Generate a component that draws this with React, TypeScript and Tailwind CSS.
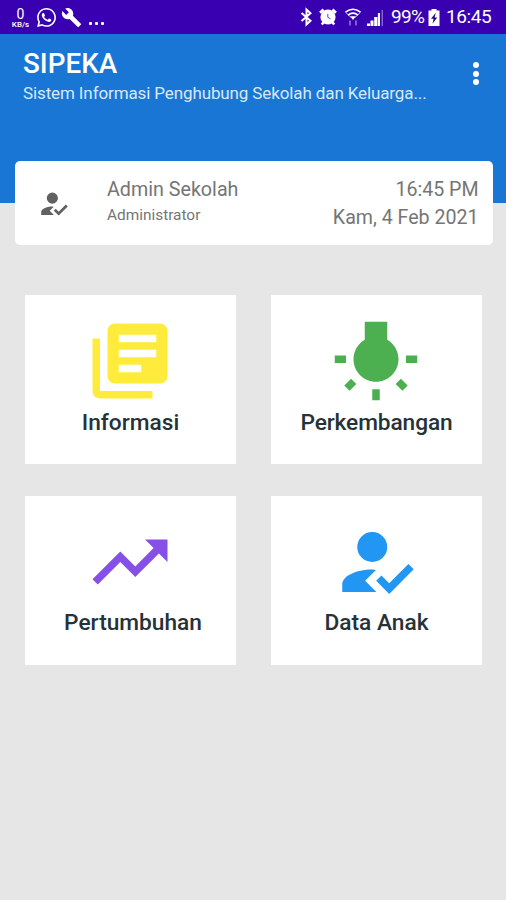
import React from 'react';

const USER_CHECK =
  'M20.65,12.5L22.05,13.91L15.52,20.5L12.05,17L13.45,15.59L15.52,17.67L20.65,12.5M9.1,17L12.1,20H3V18C3,15.79 6.58,14 11,14L11.99,14.11L9.1,17M11,4A4,4 0 0,1 15,8A4,4 0 0,1 11,12A4,4 0 0,1 7,8A4,4 0 0,1 11,4Z';

interface MenuItem {
  label: string;
  color: string;
  path: string;
  labelClass: string;
}

const menuItems: MenuItem[] = [
  {
    label: 'Informasi',
    color: 'text-[#ffeb3b]',
    path: 'M4 6H2v14c0 1.1.9 2 2 2h14v-2H4V6zm16-4H8c-1.1 0-2 .9-2 2v12c0 1.1.9 2 2 2h12c1.1 0 2-.9 2-2V4c0-1.1-.9-2-2-2zm-1 9H9V9h10v2zm-4 4H9v-2h6v2zm4-8H9V5h10v2z',
    labelClass: 'mt-[2px]',
  },
  {
    label: 'Perkembangan',
    color: 'text-[#4caf50]',
    path: 'M3.55 18.54l1.41 1.41 1.8-1.79-1.41-1.41-1.8 1.79zM11 22.45h2V19.5h-2v2.95zM4 10.5H1v2h3v-2zm11-4.19V1.5H9v4.81C7.21 7.35 6 9.28 6 11.5c0 3.31 2.69 6 6 6s6-2.69 6-6c0-2.22-1.21-4.15-3-5.19zm5 4.19v2h3v-2h-3zm-2.76 7.66l1.79 1.8 1.41-1.41-1.8-1.79-1.4 1.4z',
    labelClass: 'mt-[2px] tracking-[-0.1px]',
  },
  {
    label: 'Pertumbuhan',
    color: 'text-[#8650e8]',
    path: 'M16 6l2.29 2.29-4.88 4.88-4-4L2 16.59 3.41 18l6-6 4 4 6.3-6.29L22 12V6z',
    labelClass: 'mt-px pl-[5px]',
  },
  {
    label: 'Data Anak',
    color: 'text-[#2196f3]',
    path: USER_CHECK,
    labelClass: 'mt-px',
  },
];

const Icon: React.FC<{ path: string; className: string }> = ({ path, className }) => (
  <svg viewBox="0 0 24 24" fill="currentColor" className={className}>
    <path d={path} />
  </svg>
);

const StatusBar: React.FC = () => (
  <div className="flex h-[34px] items-center justify-between bg-[#3900b1] pr-[13px] pl-[10px] text-white">
    <div className="flex items-center">
      <div className="flex w-[21px] flex-col items-center pt-[2px]">
        <span className="text-[14px] leading-[12px]">0</span>
        <span className="text-[8px] leading-[9px] font-medium">KB/s</span>
      </div>
      {/* WhatsApp */}
      <svg viewBox="2 2 20 20" fill="currentColor" className="ml-[6px] h-[19px] w-[19px]">
        <path d="M12.04 2C6.58 2 2.13 6.45 2.13 11.91c0 1.75.46 3.45 1.32 4.95L2.05 22l5.25-1.38c1.45.79 3.08 1.21 4.74 1.21 5.46 0 9.91-4.45 9.91-9.91S17.5 2 12.04 2zm0 18.15c-1.48 0-2.93-.4-4.2-1.15l-.3-.18-3.12.82.83-3.04-.2-.31a8.26 8.26 0 0 1-1.26-4.38c0-4.54 3.7-8.24 8.24-8.24s8.24 3.7 8.24 8.24-3.69 8.24-8.23 8.24z" />
        <path d="M16.56 13.99c-.25-.12-1.47-.72-1.69-.81-.23-.08-.39-.12-.56.12-.17.25-.64.81-.78.97-.14.17-.29.19-.54.06-.25-.12-1.05-.39-1.99-1.23-.74-.66-1.23-1.47-1.38-1.72-.14-.25-.02-.38.11-.51.11-.11.25-.29.37-.43s.17-.25.25-.41c.08-.17.04-.31-.02-.43s-.56-1.34-.76-1.84c-.2-.48-.41-.42-.56-.43h-.48c-.17 0-.43.06-.66.31-.22.25-.86.85-.86 2.07s.89 2.4 1.01 2.56c.12.17 1.75 2.67 4.23 3.74 2.49 1.07 2.49.71 2.94.67s1.47-.6 1.67-1.18c.21-.58.21-1.07.14-1.18z" />
      </svg>
      <Icon
        className="ml-[5px] h-[21px] w-[21px]"
        path="M22.7 19l-9.1-9.1c.9-2.3.4-5-1.5-6.9-2-2-5-2.4-7.4-1.3L9 6 6 9 1.6 4.7C.4 7.1.9 10.1 2.9 12.1c1.9 1.9 4.6 2.4 6.9 1.5l9.1 9.1c.4.4 1 .4 1.4 0l2.3-2.3c.5-.4.5-1.1.1-1.4z"
      />
      <div className="ml-[7px] flex gap-[3px] pt-3">
        <span className="h-[3px] w-[3px] rounded-[1px] bg-white" />
        <span className="h-[3px] w-[3px] rounded-[1px] bg-white" />
        <span className="h-[3px] w-[3px] rounded-[1px] bg-white" />
      </div>
    </div>
    <div className="flex items-center">
      <svg viewBox="0 0 13 20" fill="none" stroke="currentColor" strokeWidth="2" className="h-5 w-[13px]">
        <path d="M1.5 6l9 7.8-4 3.7V2.5l4 3.7-9 7.8" />
      </svg>
      {/* Alarm */}
      <svg viewBox="0 0 18 18" className="ml-[6px] h-[18px] w-[18px]">
        <circle cx="9" cy="9" r="7.6" fill="currentColor" />
        <path d="M1 4.7L4.5 1.5M17 4.7L13.5 1.5M2.8 16.5l2-2.5M15.2 16.5l-2-2.5" stroke="currentColor" strokeWidth="2.6" />
        <path d="M8.8 5.8v3.5l2.7 1.5" fill="none" stroke="#3900b1" strokeWidth="1" opacity=".75" />
      </svg>
      {/* Wifi */}
      <svg viewBox="0 0 18 20" fill="none" stroke="currentColor" strokeWidth="1.6" className="ml-[7px] h-5 w-[18px]">
        <path d="M1.5 5.2Q9 -.6 16.5 5.2M4 8.1Q9 4.2 14 8.1" />
        <path d="M6.2 9.2h5.6L9 13z" fill="currentColor" stroke="none" />
        <path d="M1.5 5.2L7 10.5M16.5 5.2L11 10.5" strokeWidth="1" opacity=".7" />
        <path d="M6 13.5v5M12 18.5v-5" strokeWidth="1.8" opacity=".4" />
      </svg>
      {/* Signal */}
      <svg viewBox="0 0 18 19" fill="currentColor" className="ml-1 h-[19px] w-[18px]">
        <path d="M1 15.5h3v2.5H1zM4.5 12.500h3V18h-3zM8.200 9h3.200v9H8.200zM11.900 5h2.100v13h-2.100z" />
        <path d="M15.6 2H17v16h-1.4z" opacity=".4" />
      </svg>
      <span className="ml-[7px] w-[34px] text-[19px] leading-[24px] tracking-[-0.7px]">99%</span>
      <svg viewBox="0 0 12 19" className="ml-[3px] h-[19px] w-[12px]">
        <path d="M3.5 1h5v1.5h3V18H.5V2.5h3z" fill="currentColor" />
        <path d="M7.8 4.8L3 10.8h2.6L4.5 15.8l4.7-6.4H6.6z" fill="#28087c" />
      </svg>
      <span className="ml-[6px] w-[47px] text-[19px] leading-[24px] tracking-[-0.4px]">16:45</span>
    </div>
  </div>
);

const Header: React.FC = () => (
  <header className="flex h-[169px] justify-between bg-[#1976d4] pl-[23px] text-white">
    <div className="pt-[13px]">
      <h1 className="text-[27.8px] leading-[34px] font-medium">SIPEKA</h1>
      <p className="text-[17px] leading-6 tracking-[-0.12px] text-[#d9e8f8]">
        Sistem Informasi Penghubung Sekolah dan Keluarga...
      </p>
    </div>
    <div className="flex w-[61px] flex-col items-center gap-[2.5px] pt-[28px]">
      <span className="h-[6px] w-[6px] rounded-full bg-white" />
      <span className="h-[6px] w-[6px] rounded-full bg-white" />
      <span className="h-[6px] w-[6px] rounded-full bg-white" />
    </div>
  </header>
);

const ProfileCard: React.FC = () => (
  <section className="relative mr-[13.5px] -mt-[42.5px] ml-[14.5px] flex h-[84.5px] rounded-[5px] bg-white pr-[14px] pl-[22px] text-[#757575]">
    <Icon path={USER_CHECK} className="mt-[26px] h-[33.5px] w-[33.5px] text-[#616161]" />
    <div className="ml-[37px] flex-1 pt-[16px]">
      <p className="text-[19.7px] leading-[26px]">Admin Sekolah</p>
      <p className="text-[15.4px] leading-[24px]">Administrator</p>
    </div>
    <div className="pt-[15px] text-right text-[19.6px] leading-[28px]">
      <p>16:45 PM</p>
      <p>Kam, 4 Feb 2021</p>
    </div>
  </section>
);

export default function App() {
  return (
    <div className="h-[900px] w-[506px] overflow-hidden bg-[#e6e6e6] font-['Roboto',sans-serif]">
      <StatusBar />
      <Header />
      <ProfileCard />
      <main className="mt-[50px] grid grid-cols-2 gap-x-[35px] gap-y-[31.5px] pr-[24px] pl-[25px]">
        {menuItems.map((item) => (
          <div key={item.label} className="flex h-[169px] flex-col items-center bg-white pt-[21px]">
            <Icon path={item.path} className={`mr-[0.5px] h-[90px] w-[90px] ${item.color}`} />
            <p className={`text-[22.7px] leading-[30px] font-medium text-[#263238] ${item.labelClass}`}>
              {item.label}
            </p>
          </div>
        ))}
      </main>
    </div>
  );
}
